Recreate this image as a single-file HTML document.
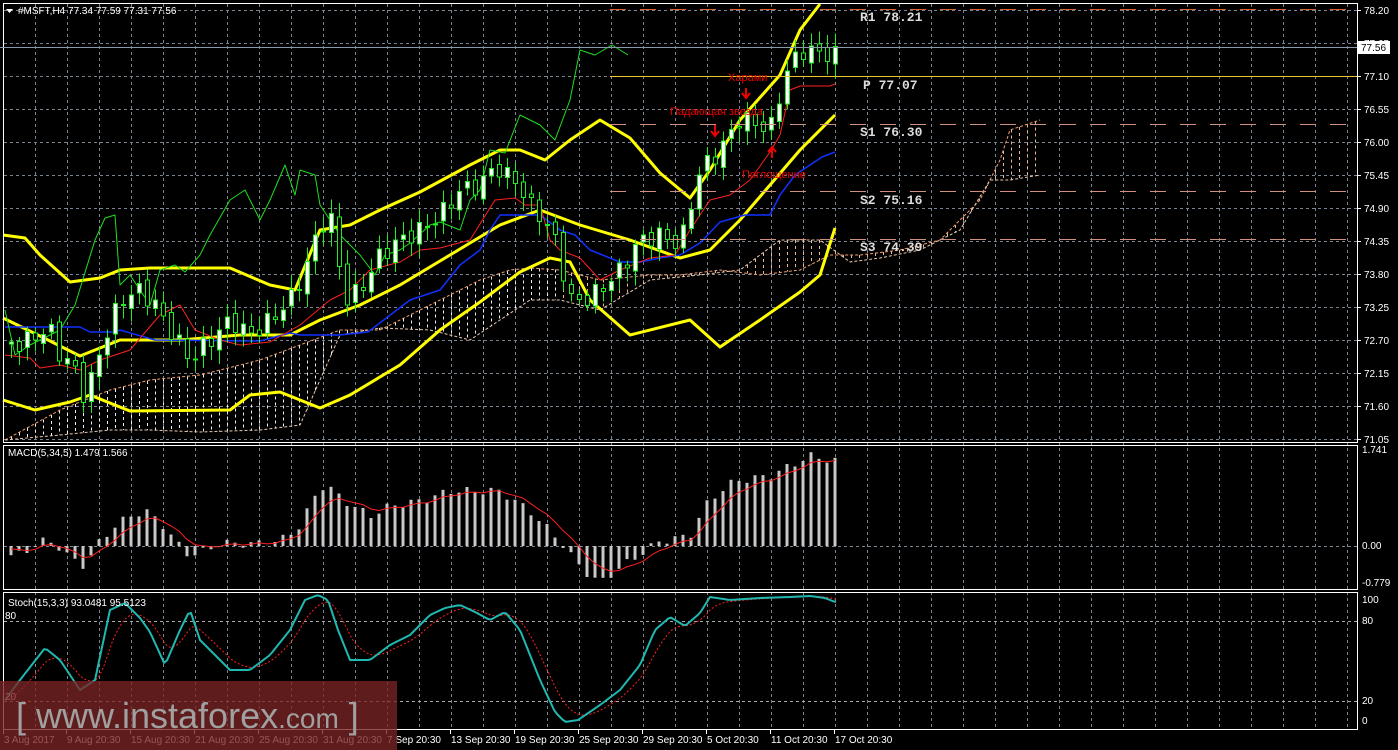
<!DOCTYPE html>
<html><head><meta charset="utf-8"><style>
html,body{margin:0;padding:0;background:#000;width:1398px;height:750px;overflow:hidden}
svg{display:block}
text{font-family:"Liberation Sans",sans-serif;font-size:10px;fill:#fff}
.mono{font-family:"Liberation Mono",monospace;font-size:13px;font-weight:bold;fill:#ddd}
.ru{font-family:"Liberation Sans","DejaVu Sans",sans-serif;font-size:11px;fill:#e00}
</style></head><body>
<svg id="s" width="1398" height="750" xmlns="http://www.w3.org/2000/svg">
<rect width="1398" height="750" fill="#000"/>
<g id="grid"></g>
<g id="cloud"></g>
<g id="ind"></g>
<g id="candles"></g>
<g id="macd"></g>
<g id="stoch"></g>
<rect x="3.5" y="3.5" width="1354" height="439" fill="none" stroke="#fff"/>
<rect x="3.5" y="445.5" width="1354" height="144" fill="none" stroke="#fff"/>
<rect x="3.5" y="592.5" width="1354" height="137" fill="none" stroke="#fff"/>
<line x1="610" y1="9.5" x2="1357" y2="9.5" stroke="#e06030" stroke-dasharray="16,14"/>
<line x1="0" y1="47.5" x2="1357" y2="47.5" stroke="#8899aa"/>
<line x1="610" y1="76.5" x2="1357" y2="76.5" stroke="#e8c830"/>
<line x1="610" y1="124.5" x2="1357" y2="124.5" stroke="#d09080" stroke-dasharray="16,14"/>
<line x1="610" y1="191.5" x2="1357" y2="191.5" stroke="#d09080" stroke-dasharray="16,14"/>
<line x1="610" y1="239.5" x2="1357" y2="239.5" stroke="#d09080" stroke-dasharray="16,14"/>
<text class="mono" x="860" y="21">R1 78.21</text>
<text class="mono" x="863" y="89">P 77.07</text>
<text class="mono" x="860" y="136">S1 76.30</text>
<text class="mono" x="860" y="204">S2 75.16</text>
<text class="mono" x="860" y="251">S3 74.39</text>
<text class="ru" x="728" y="81">Харами</text>
<text class="ru" x="670" y="115">Падающая звезда</text>
<text class="ru" x="742" y="178">Поглощение</text>
<path d="M746 88v9m-4-4l4 5 4-5" stroke="#e00" stroke-width="2" fill="none"/>
<path d="M715 125v10m-4-4l4 5 4-5" stroke="#e00" stroke-width="2" fill="none"/>
<path d="M772 158v-10m-4 4l4-5 4 5" stroke="#e00" stroke-width="2" fill="none"/>
<path d="M6 9h7l-3.5 4z" fill="#fff"/>
<text x="18" y="14">#MSFT,H4  77.34 77.59 77.31 77.56</text>
<text x="8" y="456">MACD(5,34,5) 1.479 1.566</text>
<text x="8" y="606">Stoch(15,3,3) 93.0481 95.5123</text>
<text x="5" y="619">80</text>
<text x="5" y="700">20</text>
<g id="axis"></g>
<rect x="1358" y="41" width="32" height="13" fill="#fff"/>
<text x="1361" y="51" style="fill:#000">77.56</text>
<rect x="0" y="681" width="397" height="69" fill="#7a2424" fill-opacity="0.78"/>
<text x="16" y="728" style="font-size:36px;fill:#a0a0a0;font-family:'Liberation Sans',sans-serif">[ www.instaforex<tspan style="font-size:28px">.com</tspan> ]</text>
</svg>
<script>
var NS="http://www.w3.org/2000/svg";
function el(p,t,a){var e=document.createElementNS(NS,t);for(var k in a)e.setAttribute(k,a[k]);document.getElementById(p).appendChild(e);return e;}
function pl(p,pts,st,w,da){el(p,"polyline",{points:pts.map(function(q){return q.join(",")}).join(" "),fill:"none",stroke:st,"stroke-width":w,"stroke-dasharray":da||"none","stroke-linejoin":"round"});}
function interp(k,x){if(x<=k[0][0])return k[0][1];for(var i=1;i<k.length;i++){if(x<=k[i][0]){var a=k[i-1],b=k[i];return a[1]+(b[1]-a[1])*(x-a[0])/(b[0]-a[0]);}}return k[k.length-1][1];}
for(var x=35;x<1357;x+=32){el("grid","line",{x1:x+.5,y1:4,x2:x+.5,y2:729,stroke:"#7a8590","stroke-dasharray":"3,3"});}
for(var y=10;y<442;y+=33){el("grid","line",{x1:4,y1:y+.5,x2:1357,y2:y+.5,stroke:"#7a8590","stroke-dasharray":"3,3"});}
el("grid","line",{x1:4,y1:546.5,x2:1357,y2:546.5,stroke:"#7a8590","stroke-dasharray":"3,3"});
el("grid","line",{x1:4,y1:621.5,x2:1357,y2:621.5,stroke:"#aaa","stroke-dasharray":"3,3"});
el("grid","line",{x1:4,y1:701.5,x2:1357,y2:701.5,stroke:"#aaa","stroke-dasharray":"3,3"});
var pr=["78.20","77.65","77.10","76.55","76.00","75.45","74.90","74.35","73.80","73.25","72.70","72.15","71.60","71.05"];
for(var i=0;i<pr.length;i++){var yy=10+33*i;el("axis","line",{x1:1357,y1:yy+.5,x2:1361,y2:yy+.5,stroke:"#fff"});var t=el("axis","text",{x:1364,y:yy+4});t.textContent=pr[i];}
[["1.741",453],["0.00",549],["-0.779",586],["100",603],["80",624],["20",704],["0",724]].forEach(function(a){var t=el("axis","text",{x:1362,y:a[1]});t.textContent=a[0];});
var ds=[["3 Aug 2017",3],["9 Aug 20:30",66],["15 Aug 20:30",130],["21 Aug 20:30",194],["25 Aug 20:30",258],["31 Aug 20:30",322],["7 Sep 20:30",386],["13 Sep 20:30",450],["19 Sep 20:30",514],["25 Sep 20:30",578],["29 Sep 20:30",642],["5 Oct 20:30",706],["11 Oct 20:30",770],["17 Oct 20:30",834]];
ds.forEach(function(d){el("axis","line",{x1:d[1]+.5,y1:730,x2:d[1]+.5,y2:734,stroke:"#fff"});var t=el("axis","text",{x:d[1]+1,y:743});t.textContent=d[0];});
var cu=[[5,440],[60,410],[110,390],[150,380],[200,375],[260,360],[300,345],[340,330],[380,330],[420,310],[450,295],[480,280],[510,270],[530,268],[560,270],[600,280],[650,275],[680,275],[720,270],[760,275],[800,270],[830,255],[860,255],[900,250],[940,240],[980,200],[1000,160],[1010,130],[1040,120]];
var cl=[[5,440],[60,435],[110,430],[150,430],[200,432],[260,430],[300,425],[340,335],[380,328],[430,330],[470,340],[500,320],[530,300],[560,300],[600,310],[650,280],[700,275],[740,270],[780,240],[820,240],[850,262],[880,258],[920,250],[960,230],[990,180],[1010,180],[1040,175]];
for(var x=11;x<=1040;x+=8){var a=interp(cu,x),b=interp(cl,x);el("cloud","line",{x1:x+.5,y1:Math.min(a,b),x2:x+.5,y2:Math.max(a,b),stroke:x<560?"#f0f0f0":"#f0b890","stroke-dasharray":"3,3","stroke-width":1,"shape-rendering":"crispEdges"});}
pl("cloud",cu,"#f0a070",1,"3,2");pl("cloud",cl,"#e8c8b0",1,"3,2");
pl("ind",[[3,235],[25,238],[40,255],[70,282],[100,278],[120,270],[150,268],[230,268],[270,285],[295,290],[320,230],[350,225],[380,210],[420,192],[470,165],[500,150],[520,150],[545,160],[570,140],[600,120],[630,138],[660,173],[690,198],[710,170],[740,120],[780,75],[800,30],[820,4]],"#ffff00",3);
pl("ind",[[3,318],[40,336],[80,356],[120,340],[180,340],[240,335],[290,335],[320,320],[360,305],[400,285],[450,255],[500,225],[540,210],[580,225],[630,240],[680,258],[710,250],[740,220],[770,185],[800,150],[835,115]],"#ffff00",3);
pl("ind",[[3,400],[35,410],[70,402],[90,395],[130,411],[230,410],[250,395],[280,392],[320,408],[350,395],[400,365],[440,330],[480,302],[520,272],[550,258],[570,262],[590,300],[630,335],[690,320],[720,347],[760,320],[800,292],[820,275],[835,228]],"#ffff00",3);
pl("ind",[[5,327],[80,327],[90,332],[115,332],[120,330],[155,340],[260,341],[290,333],[300,335],[340,335],[368,332],[410,300],[440,290],[460,265],[480,250],[490,230],[500,215],[540,215],[560,230],[575,235],[590,250],[620,262],[640,262],[660,258],[680,255],[700,243],[720,222],[745,215],[770,215],[780,195],[795,175],[810,165],[822,157],[835,152]],"#1030ff",1.5);
pl("ind",[[5,355],[30,358],[40,368],[60,365],[80,370],[100,360],[130,350],[160,315],[180,305],[195,330],[220,340],[240,345],[270,342],[300,325],[330,300],[350,290],[370,270],[400,262],[420,250],[440,248],[470,240],[495,200],[515,198],[525,205],[540,205],[550,240],[560,250],[580,258],[600,280],[620,270],[650,258],[675,255],[690,230],[700,215],[710,200],[730,195],[750,180],[770,152],[780,135],[790,90],[800,86],[830,86],[835,84]],"#ff2020",1);
pl("ind",[[5,310],[15,355],[30,345],[60,330],[75,305],[95,240],[105,218],[115,215],[120,285],[130,275],[150,305],[160,270],[175,265],[185,272],[200,255],[210,235],[230,200],[245,190],[260,220],[270,200],[285,165],[295,195],[300,170],[315,175],[320,205],[340,235],[360,255],[375,275],[385,255],[400,250],[410,243],[430,225],[440,222],[460,230],[470,200],[480,190],[490,150],[505,153],[520,115],[540,125],[555,140],[570,100],[580,50],[595,55],[612,45],[628,55]],"#20dd20",1);
var pk=[[5,340],[20,345],[35,335],[50,330],[60,355],[75,370],[85,400],[100,350],[120,300],[140,290],[155,305],[170,330],[190,360],[210,340],[230,320],[250,335],[270,320],[290,300],[305,270],[320,225],[330,215],[345,300],[360,290],[380,255],[400,240],[420,230],[440,215],[460,190],[480,185],[495,165],[505,175],[515,180],[530,205],[540,215],[555,240],[570,300],[585,300],[600,290],[620,270],[640,240],[660,235],[680,245],[700,170],[720,150],[740,118],[760,125],[770,130],[785,75],[800,50],[815,52],[835,55]];
var prev=interp(pk,3);
for(var i=0;i<104;i++){var x=11+8*i;var c=interp(pk,x)+Math.sin(i*2.3)*9;var o=prev+Math.cos(i*1.7)*4;prev=c;
var hi=Math.min(o,c)-4-Math.abs(Math.sin(i*3.1))*10,lo=Math.max(o,c)+4+Math.abs(Math.cos(i*2.9))*10;
el("candles","line",{x1:x+.5,y1:hi,x2:x+.5,y2:lo,stroke:"#20ee20","shape-rendering":"crispEdges"});
var bull=c<o;el("candles","rect",{x:x-1.5,y:Math.min(o,c),width:4,height:Math.max(1,Math.abs(o-c)),fill:bull?"#fff":"#000",stroke:"#20ee20","shape-rendering":"crispEdges"});}
var mk=[[5,-8],[15,-10],[25,-6],[40,5],[55,3],[70,-12],[85,-20],[100,5],[115,20],[130,30],[145,35],[160,25],[175,5],[190,-10],[205,-5],[220,3],[250,2],[280,5],[300,20],[315,50],[325,62],[345,45],[370,30],[390,40],[420,45],[450,55],[480,55],[500,55],[515,45],[530,35],[545,20],[560,5],[575,-15],[590,-30],[600,-37],[615,-25],[630,-15],[645,-5],[660,5],[690,10],[705,40],[720,55],[735,65],[755,68],[770,70],[790,80],[810,90],[835,85]];
var sg=[],sv=0;
for(var i=0;i<104;i++){var x=11+8*i;var v=interp(mk,x)+Math.sin(i*1.9)*4;sv=sv+(v-sv)*0.33;sg.push([x,546-sv]);
el("macd","rect",{x:x-1.5,y:v>0?546-v:546,width:3,height:Math.abs(v),fill:"#c8c8c8"});}
pl("macd",sg,"#ff2020",1);
var sk=[[5,700],[20,680],[45,648],[60,660],[80,690],[95,680],[110,610],[125,603],[140,618],[150,632],[165,665],[180,630],[190,610],[200,640],[215,655],[230,670],[250,670],[270,655],[290,630],[305,600],[318,595],[328,600],[338,630],[350,660],[370,660],[390,645],[410,635],[430,615],[445,608],[460,605],[475,612],[490,620],[505,612],[520,630],[540,680],[555,712],[565,722],[578,720],[600,705],[620,690],[640,665],[655,630],[670,617],[685,626],[700,613],[710,597],[730,600],[760,598],[790,597],[810,596],[825,598],[835,602]];
var spts=[],dpts=[],dv=700;
for(var x=5;x<=836;x+=3){var v=interp(sk,x);spts.push([x,v]);dv=dv+(v-dv)*0.2;dpts.push([x,dv]);}
pl("stoch",dpts,"#ff2020",1,"2,2");pl("stoch",spts,"#20b8b0",2);
</script>
</body></html>
